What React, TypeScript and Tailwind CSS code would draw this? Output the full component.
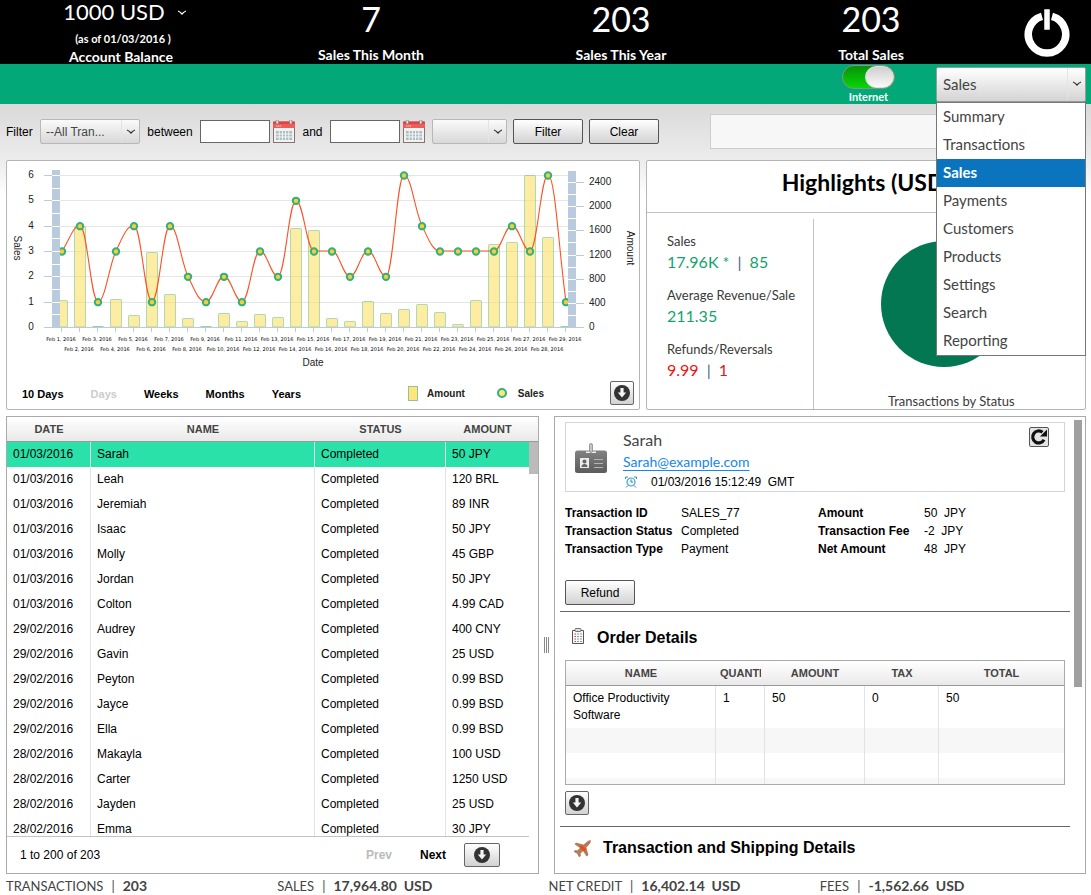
import React from 'react';

const ARIAL = "font-['Liberation_Sans',Arial,sans-serif]";
const LATO = "font-['Lato',Carlito,sans-serif]";

const stats = [
  { value: '7', label: 'Sales This Month' },
  { value: '203', label: 'Sales This Year' },
  { value: '203', label: 'Total Sales' },
];

const menuItems = [
  'Summary',
  'Transactions',
  'Sales',
  'Payments',
  'Customers',
  'Products',
  'Settings',
  'Search',
  'Reporting',
];

const sales = [
  ['01/03/2016', 'Sarah', '50 JPY'],
  ['01/03/2016', 'Leah', '120 BRL'],
  ['01/03/2016', 'Jeremiah', '89 INR'],
  ['01/03/2016', 'Isaac', '50 JPY'],
  ['01/03/2016', 'Molly', '45 GBP'],
  ['01/03/2016', 'Jordan', '50 JPY'],
  ['01/03/2016', 'Colton', '4.99 CAD'],
  ['29/02/2016', 'Audrey', '400 CNY'],
  ['29/02/2016', 'Gavin', '25 USD'],
  ['29/02/2016', 'Peyton', '0.99 BSD'],
  ['29/02/2016', 'Jayce', '0.99 BSD'],
  ['29/02/2016', 'Ella', '0.99 BSD'],
  ['28/02/2016', 'Makayla', '100 USD'],
  ['28/02/2016', 'Carter', '1250 USD'],
  ['28/02/2016', 'Jayden', '25 USD'],
  ['28/02/2016', 'Emma', '30 JPY'],
];

const totals = [
  ['TRANSACTIONS', '203', ''],
  ['SALES', '17,964.80', 'USD'],
  ['NET CREDIT', '16,402.14', 'USD'],
  ['FEES', '-1,562.66', 'USD'],
];

const dailySales = [
  3, 4, 1, 3, 4, 1, 4, 2, 1, 2, 1, 3, 2, 5, 3, 3, 2, 3, 2, 6, 4, 3, 3, 3, 3, 4, 3, 6, 1,
];
const dailyAmount = [
  445, 1670, 15, 460, 195, 1240, 545, 150, 15, 230, 100, 210, 165, 1640, 1605, 145, 105, 430, 230,
  295, 380, 245, 50, 455, 1370, 1405, 2510, 1490, 15,
];

const X0 = 62;
const DX = 18;
const BASE = 327;
const xAt = (i: number) => X0 + i * DX;
const ySales = (v: number) => BASE - (v * 152) / 6;
const yAmount = (v: number) => BASE - (v * 145) / 2400;

function splinePath(values: number[]) {
  const ys = values.map(ySales);
  const slope = ys.map((y, i) => {
    if (i === 0) return (ys[1] - y) / DX;
    if (i === ys.length - 1) return (y - ys[i - 1]) / DX;
    const before = y - ys[i - 1];
    const after = ys[i + 1] - y;
    return before * after <= 0 ? 0 : (before + after) / 2 / DX;
  });
  let d = `M${xAt(0)} ${ys[0]}`;
  for (let i = 1; i < ys.length; i++) {
    const h = DX * 0.4;
    d += ` C${xAt(i - 1) + h} ${ys[i - 1] + slope[i - 1] * h} ${xAt(i) - h} ${ys[i] - slope[i] * h} ${xAt(i)} ${ys[i]}`;
  }
  return d;
}

function Chart() {
  return (
    <svg
      viewBox="7 161 632 211"
      className="block w-full"
      role="img"
      aria-label="Sales and amount by date"
      fontFamily="'Liberation Sans', Arial, sans-serif"
    >
      {[1, 2, 3, 4, 5, 6].map((v) => (
        <path key={v} d={`M60 ${Math.round(ySales(v)) + 0.5}H568`} stroke="#e6e6e6" />
      ))}
      {dailyAmount.map((v, i) => {
        const left = Math.max(xAt(i) - 6, 58) + 0.5;
        const right = xAt(i) + 5.5;
        const y = Math.round(yAmount(v)) + 0.5;
        return (
          <rect
            key={i}
            x={left}
            y={y}
            width={right - left}
            height={Math.max(BASE - y, 0.5)}
            rx="1"
            fill="#ffe066"
            fillOpacity="0.6"
            stroke="#2eb37c"
            strokeOpacity="0.4"
          />
        );
      })}
      <path d="M44 327.5H584" stroke="#b9cbdc" />
      {dailySales.map((_, i) => (
        <path key={i} d={`M${xAt(i) - 0.5} 327v5`} stroke="#b9cbdc" />
      ))}
      <path d={splinePath(dailySales)} fill="none" stroke="#fb5325" strokeWidth="1.1" />
      {dailySales.map((v, i) => (
        <circle key={i} cx={xAt(i)} cy={ySales(v) + 0.5} r="3.2" fill="#ffc83d" stroke="#2eb37c" strokeWidth="2" />
      ))}
      <rect x="52" y="170" width="8" height="157" fill="#b9cbdc" />
      <rect x="568" y="171" width="8" height="156" fill="#b9cbdc" />
      {Array.from({ length: 12 }, (_, i) => (
        <path key={i} d={`M52 ${Math.round(ySales((i + 1) / 2)) + 0.5}h8`} stroke="#fff" />
      ))}
      {Array.from({ length: 12 }, (_, i) => (
        <path key={i} d={`M568 ${Math.round(yAmount((i + 1) * 200)) + 0.5}h8`} stroke="#fff" />
      ))}
      <g fontSize="10" fill="#222">
        {[0, 1, 2, 3, 4, 5, 6].map((v) => (
          <g key={v}>
            <path d={`M44 ${Math.round(ySales(v)) + 0.5}h8`} stroke="#b9cbdc" />
            <text x="31" y={ySales(v) + 3} textAnchor="middle">
              {v}
            </text>
          </g>
        ))}
        {[0, 400, 800, 1200, 1600, 2000, 2400].map((v) => (
          <g key={v}>
            <path d={`M576 ${Math.round(yAmount(v)) + 0.5}h8`} stroke="#b9cbdc" />
            <text x="589" y={yAmount(v) + 3}>
              {v}
            </text>
          </g>
        ))}
        <text x="313" y="366" textAnchor="middle">
          Date
        </text>
        <text transform="translate(14 248) rotate(90)" textAnchor="middle">
          Sales
        </text>
        <text transform="translate(627 248) rotate(90)" textAnchor="middle">
          Amount
        </text>
      </g>
      <g fontSize="5" fill="#000" fontFamily="'DejaVu Sans', sans-serif">
        {dailySales.map((_, i) => (
          <text key={i} x={xAt(i) - 1} y={i % 2 ? 351 : 341} textAnchor="middle">
            {`Feb ${i + 1}, 2016`}
          </text>
        ))}
      </g>
    </svg>
  );
}

function Chevron({ className }: { className: string }) {
  return (
    <svg viewBox="0 0 10 6" className={className} aria-hidden="true">
      <path d="M1 1q2 0.6 4 3q2 -2.4 4 -3" fill="none" stroke="currentColor" strokeWidth="1.3" />
    </svg>
  );
}

function DownloadButton({ wide }: { wide?: boolean }) {
  return (
    <button
      type="button"
      aria-label="Download"
      className={`flex h-6 items-center justify-center rounded-xs border border-[#666] bg-linear-to-b from-white to-[#d2d2d2] ${wide ? 'w-9' : 'w-6'}`}
    >
      <svg viewBox="0 0 16 16" className="size-4" aria-hidden="true">
        <circle cx="8" cy="8" r="8" fill="#333" />
        <path d="M6.4 3h3.2v4.6h2.6L8 12.6 3.800 7.600h2.600z" fill="#f4f4f4" />
      </svg>
    </button>
  );
}

function PushButton({ children }: { children: React.ReactNode }) {
  return (
    <button
      type="button"
      className="h-[25px] w-[70px] rounded-xs border border-[#555] bg-linear-to-b from-white to-[#d2d2d2] text-xs text-black"
    >
      {children}
    </button>
  );
}

function SmallSelect({ label, value, width }: { label: string; value: string; width: string }) {
  return (
    <div className={`relative ${width}`}>
      <select
        aria-label={label}
        className="h-[25px] w-full appearance-none rounded-xs border border-[#b8b8b8] bg-linear-to-b from-[#fafafa] to-[#d8d8d8] pl-[5px] text-xs text-[#444]"
      >
        <option>{value}</option>
      </select>
      <span className="pointer-events-none absolute inset-y-px right-0 flex w-[19px] items-center justify-center border-l border-[#e4e4e4]">
        <Chevron className="w-[10px] text-[#333]" />
      </span>
    </div>
  );
}

function DateInput({ label }: { label: string }) {
  return (
    <div className="flex items-center gap-[3px]">
      <input aria-label={label} type="text" className="h-[23px] w-[70px] border border-[#666] bg-white px-1 text-xs" />
      <button type="button" aria-label={`Pick ${label}`}>
        <svg viewBox="0 0 22 23" className="h-[23px] w-[22px]" aria-hidden="true">
          <rect x="0.5" y="7" width="21" height="15.500" fill="#eef2f2" stroke="#8a7272" />
          <path d="M0 2.500q0-1 1-1h20q1 0 1 1V8H0z" fill="#ef5c5c" />
          <path d="M0 2.500q0-1 1-1h20q1 0 1 1V4H0z" fill="#dd4444" />
          <path d="M3 6h5" stroke="#ffd6d6" strokeDasharray="1.500 0.500" />
          <rect x="3" y="0" width="2.500" height="4" rx="1" fill="#ddd" stroke="#777" strokeWidth="0.6" />
          <rect x="16.500" y="0" width="2.500" height="4" rx="1" fill="#ddd" stroke="#777" strokeWidth="0.6" />
          <rect x="3" y="11" width="16" height="9" fill="#aebcc0" />
          <path d="M3 14h16M3 17h16M6.200 11v9M9.400 11v9M12.600 11v9M15.800 11v9" stroke="#f2f6f6" />
        </svg>
      </button>
    </div>
  );
}

function Header() {
  return (
    <header className={`grid h-16 grid-cols-[246fr_250fr_250fr_250fr_95fr] bg-black text-center text-white ${LATO}`}>
      <div className="flex flex-col items-center pr-1">
        <button type="button" className="-mt-[2px] ml-2 flex h-7 items-center gap-3 text-[22px] leading-7">
          1000 USD
          <Chevron className="mt-px w-[10px]" />
        </button>
        <div className="mt-[5px] ml-1 text-[11px] leading-4 font-bold">(as of 01/03/2016 )</div>
        <div className="mt-px text-[14px] leading-[17px] font-bold">Account Balance</div>
      </div>
      {stats.map((s) => (
        <div key={s.label} className="-mt-[2px]">
          <div className="h-[48px] text-[34px] leading-[41px]">{s.value}</div>
          <div className="text-[14px] leading-[17px] font-bold">{s.label}</div>
        </div>
      ))}
      <div className="flex items-center justify-center pl-[6px]">
        <button type="button" aria-label="Log out">
          <svg viewBox="0 0 46 48" className="h-12 w-[46px]" aria-hidden="true">
            <path
              d="M18 7.300A18.700 18.700 0 1 0 28 7.300"
              fill="none"
              stroke="#fff"
              strokeWidth="7.500"
            />
            <rect x="20" y="0" width="6" height="21" fill="#fff" stroke="#000" strokeWidth="0.5" />
          </svg>
        </button>
      </div>
    </header>
  );
}

function NavBar() {
  return (
    <nav className={`flex h-10 items-start justify-end gap-[41px] bg-[#02a877] pr-[5px] ${LATO}`}>
      <label className="flex flex-col items-center pt-px text-[11px] font-bold text-white">
        <input type="checkbox" defaultChecked className="peer sr-only" />
        <span className="flex h-6 w-[53px] justify-end rounded-full border border-[#8f8f8f] bg-linear-to-b from-[#089208] to-[#06d706]">
          <span className="h-full w-[29px] rounded-full border border-[#e0e0e0] bg-linear-to-b from-[#cfcfcf] to-[#fafafa]" />
        </span>
        <span className="leading-4">Internet</span>
      </label>
      <div className="relative mt-[3px] w-[150px]">
        <select
          aria-label="Section"
          defaultValue="Sales"
          className="h-[35px] w-full appearance-none rounded-xs border border-[#9a9a9a] bg-linear-to-b from-white to-[#d4d4d4] pl-[6px] text-[15px] text-[#444]"
        >
          {menuItems.map((m) => (
            <option key={m}>{m}</option>
          ))}
        </select>
        <span className="pointer-events-none absolute top-px right-0 flex h-8 w-[19px] items-center justify-center border-l border-[#e4e4e4]">
          <Chevron className="w-[10px] text-[#333]" />
        </span>
        <ul
          role="listbox"
          aria-label="Sections"
          className="absolute top-[35px] left-0 z-10 w-full border border-[#777] bg-white text-[15px] leading-[26px] text-[#444]"
        >
          {menuItems.map((m) => (
            <li
              key={m}
              role="option"
              aria-selected={m === 'Sales'}
              className={m === 'Sales' ? 'bg-[#0b74be] pb-[2px] pl-[6px] font-bold text-white' : 'pb-[2px] pl-[6px]'}
            >
              {m}
            </li>
          ))}
        </ul>
      </div>
    </nav>
  );
}

function FilterBar() {
  return (
    <form className={`flex h-14 items-center px-[6px] pb-px text-xs text-black ${ARIAL}`} onSubmit={(e) => e.preventDefault()}>
      <span className="w-[34px]">Filter</span>
      <SmallSelect label="Transaction filter" value="--All Tran..." width="w-[100px]" />
      <span className="w-[60px] text-center">between</span>
      <DateInput label="start date" />
      <span className="w-[35px] text-center">and</span>
      <DateInput label="end date" />
      <div className="ml-[7px] flex gap-[6px]">
        <SmallSelect label="Currency" value="" width="w-[75px]" />
        <PushButton>Filter</PushButton>
        <PushButton>Clear</PushButton>
      </div>
      <input aria-label="Search" type="text" className="ml-[51px] h-[35px] min-w-0 flex-1 border border-[#ccc] bg-[#f7f7f7] px-2" />
    </form>
  );
}

function ChartCard() {
  const ranges = ['10 Days', 'Days', 'Weeks', 'Months', 'Years'];
  return (
    <section className={`rounded-xs border border-[#b5b5b5] bg-white ${ARIAL}`}>
      <Chart />
      <div className="flex h-[37px] items-start pt-[9px] pr-[5px] pl-[15px]">
        <div className="flex h-[26px] items-center gap-[27px] text-[11px] font-bold">
          {ranges.map((r) => (
            <button key={r} type="button" disabled={r === 'Days'} className="text-black disabled:text-[#ccc]">
              {r}
            </button>
          ))}
        </div>
        <div className="ml-auto flex h-6 items-center text-[10px] font-bold text-[#222]">
          <span className="mr-[9px] h-[15px] w-[10px] border border-[#8cc49c] bg-[#ffe57a]" />
          Amount
          <span className="mr-[11px] ml-8 size-[10px] rounded-full border-2 border-[#2eb37c] bg-[#ffe57a]" />
          Sales
        </div>
        <div className="ml-[66px]">
          <DownloadButton />
        </div>
      </div>
    </section>
  );
}

function HighlightsCard() {
  return (
    <section className={`flex flex-col rounded-xs border border-[#b5b5b5] bg-white text-[#3a3a3a] ${LATO}`}>
      <h2 className="border-b border-[#bcc6c6] pt-[5px] pb-[14px] text-center text-[23px] leading-8 font-bold text-black">
        Highlights (USD)
      </h2>
      <div className="grid flex-1 grid-cols-[167fr_272fr]">
        <dl className="mt-[6px] border-r border-[#bcc6c6] pt-3 pl-5 text-[13px] leading-5">
          <dt>Sales</dt>
          <dd className="mb-3 text-[16px] leading-[22px] text-[#11a46d]">
            17.96K * <span className="px-1 text-[#3b6480]">|</span> 85
          </dd>
          <dt>Average Revenue/Sale</dt>
          <dd className="mb-3 text-[16px] leading-[22px] text-[#11a46d]">211.35</dd>
          <dt>Refunds/Reversals</dt>
          <dd className="text-[16px] leading-[22px] text-[#ee1111]">
            9.99 <span className="px-1 text-[#3b6480]">|</span> 1
          </dd>
        </dl>
        <figure className="flex flex-col items-center pt-7 pl-1">
          <svg viewBox="0 0 126 126" className="mr-[14px] size-[126px]" role="img" aria-label="Completed">
            <circle cx="63" cy="63" r="63" fill="#027752" />
          </svg>
          <figcaption className="mt-auto text-[13px] leading-4">Transactions by Status</figcaption>
        </figure>
      </div>
    </section>
  );
}

function SalesList() {
  const cell = 'h-[25px] border-r border-[#e2e2e2] px-[6px] pt-0 pb-[2px] whitespace-nowrap';
  return (
    <section className={`flex flex-col border border-[#aaa] bg-white text-xs text-black ${ARIAL}`}>
      <div className="h-[419px] overflow-hidden">
        <table className="w-full table-fixed border-separate border-spacing-0 text-left">
          <colgroup>
            <col className="w-[84px]" />
            <col />
            <col className="w-[131px]" />
            <col className="w-[83px]" />
            <col className="w-[9px]" />
          </colgroup>
          <thead className="text-[11px] text-[#444]">
            <tr>
              {['DATE', 'NAME', 'STATUS', 'AMOUNT', ''].map((h) => (
                <th
                  key={h}
                  className="h-[25px] border-b border-[#999] bg-linear-to-b from-white to-[#e9e9e9] p-0 text-center font-bold"
                >
                  {h}
                </th>
              ))}
            </tr>
          </thead>
          <tbody>
            {sales.map(([date, name, amount], i) => (
              <tr key={i} className={i === 0 ? 'bg-[#2ae2a9]' : ''}>
                <td className={cell}>{date}</td>
                <td className={cell}>{name}</td>
                <td className={cell}>Completed</td>
                <td className="h-[25px] px-[6px] pt-0 pb-[2px] whitespace-nowrap">{amount}</td>
                {i === 0 && (
                  <td rowSpan={sales.length} className="bg-white p-0 align-top">
                    <div className="h-8 bg-[#bbb]" />
                  </td>
                )}
              </tr>
            ))}
          </tbody>
        </table>
      </div>
      <div className="mr-[9px] flex h-[37px] items-center border-t border-[#bcc6c6] pr-[29px] pl-[13px]">
        <span className="mr-auto">1 to 200 of 203</span>
        <button type="button" disabled className="font-bold text-[#bbb]">
          Prev
        </button>
        <button type="button" className="mr-[18px] ml-7 font-bold">
          Next
        </button>
        <DownloadButton wide />
      </div>
    </section>
  );
}

function SalePanel() {
  const facts = [
    ['Transaction ID', 'SALES_77', 'Amount', '50\u00a0 JPY'],
    ['Transaction Status', 'Completed', 'Transaction Fee', '-2\u00a0 JPY'],
    ['Transaction Type', 'Payment', 'Net Amount', '48\u00a0 JPY'],
  ];
  return (
    <section className={`flex border border-[#aaa] bg-white pr-[3px] text-xs text-black ${ARIAL}`}>
      <div className="min-w-0 flex-1 pt-[5px] pr-1 pl-[5px]">
        <div className="mr-[5px] ml-[5px] flex h-[70px] items-start border border-[#d5d5d5]">
          <svg viewBox="0 0 32 30" className="mt-5 ml-[9px] h-[30px] w-8" aria-hidden="true">
            <defs>
              <linearGradient id="badge" x1="0" y1="0" x2="0" y2="1">
                <stop offset="0" stopColor="#828282" />
                <stop offset="1" stopColor="#5c5c5c" />
              </linearGradient>
            </defs>
            <rect x="0" y="7.500" width="32" height="22.500" rx="2.500" fill="url(#badge)" />
            <path d="M11 8.500h10v1.500H11z" fill="#f2f2f2" />
            <rect x="14.500" y="0.500" width="3" height="9" rx="1.500" fill="#c4c4c4" stroke="#8a8a8a" strokeWidth="0.800" />
            <rect x="5" y="15" width="9" height="10" fill="#ececec" />
            <circle cx="9.500" cy="18.500" r="2" fill="#666" />
            <path d="M6.500 24q0-3 3-3t3 3z" fill="#666" />
            <path d="M19 16.500h9M19 20.500h9M19 24.500h9" stroke="#b4b4b4" />
          </svg>
          <div className="ml-4 pt-[6px]">
            <div className={`text-[16px] leading-[22px] text-[#444] ${LATO}`}>Sarah</div>
            <a href="mailto:Sarah@example.com" className={`block text-[14px] leading-[22px] text-[#1686f0] underline underline-offset-3 ${LATO}`}>
              Sarah@example.com
            </a>
            <div className="flex items-center leading-[18px]">
              <svg viewBox="0 0 12 12" className="mr-[14px] ml-[2px] size-3" aria-hidden="true">
                <circle cx="6" cy="6" r="4" fill="#eaf6fb" stroke="#49a0c8" strokeWidth="1.200" />
                <path d="M6 3.500V6h2M1 11.500l2-2M11 11.500l-2-2M0.500 3V1H3M11.500 3V1H9" fill="none" stroke="#3c87ae" />
              </svg>
              01/03/2016 15:12:49&nbsp; GMT
            </div>
          </div>
          <button
            type="button"
            aria-label="Refresh"
            className="mt-1 mr-[15px] ml-auto flex size-5 items-center justify-center rounded-xs border border-[#555] bg-[#e4e4e4]"
          >
            <svg viewBox="0 0 18 18" className="size-[18px]" aria-hidden="true">
              <path d="M14 11.800A6 6 0 1 1 12.500 4.300" fill="none" stroke="#111" strokeWidth="3.200" />
              <path d="M17 1.500V8.500H10z" fill="#111" />
            </svg>
          </button>
        </div>
        <dl className="mt-3 ml-[5px] grid grid-cols-[116px_137px_106px_1fr] leading-[18px]">
          {facts.map((f) => (
            <React.Fragment key={f[0]}>
              <dt className="font-bold">{f[0]}</dt>
              <dd>{f[1]}</dd>
              <dt className="font-bold">{f[2]}</dt>
              <dd>{f[3]}</dd>
            </React.Fragment>
          ))}
        </dl>
        <div className="mt-[22px] mb-[6px] ml-[5px]">
          <PushButton>Refund</PushButton>
        </div>
        <hr className="border-[#666]" />
        <h3 className="flex h-12 items-center gap-3 pt-1 pl-[11px] text-[16px] font-bold">
          <svg viewBox="0 0 14 16" className="-mt-1 h-4 w-[14px]" aria-hidden="true">
            <path d="M1.500 2.500h11v13h-11z" fill="#f8f8f8" stroke="#555" />
            <rect x="4" y="0.500" width="6" height="3" rx="1" fill="#ddd" stroke="#555" strokeWidth="0.800" />
            <path d="M3.500 6h1.500M3.500 8.500h1.500M3.500 11h1.500M3.500 13.500h1.500" stroke="#b44" />
            <path d="M6 6h5M6 8.500h5M6 11h5M6 13.500h5" stroke="#999" strokeDasharray="2 1" />
          </svg>
          Order Details
        </h3>
        <div className="mr-[5px] ml-[5px] h-[125px] overflow-hidden border border-[#aaa]">
          <table className="w-full table-fixed border-separate border-spacing-0 text-left">
            <colgroup>
              <col className="w-[150px]" />
              <col className="w-[49px]" />
              <col className="w-[100px]" />
              <col className="w-[74px]" />
              <col />
            </colgroup>
            <thead className="text-[11px] text-[#444]">
              <tr>
                {['NAME', 'QUANTITY', 'AMOUNT', 'TAX', 'TOTAL'].map((h) => (
                  <th
                    key={h}
                    className="h-[25px] border-b border-[#999] bg-linear-to-b from-white to-[#e9e9e9] px-1 py-0 text-center font-bold"
                  >
                    <div className="overflow-hidden whitespace-nowrap">{h}</div>
                  </th>
                ))}
              </tr>
            </thead>
            <tbody className="align-top leading-[17px]">
              <tr>
                {['Office Productivity Software', '1', '50', '0', '50'].map((c, i) => (
                  <td key={i} className="h-[42px] border-r border-[#e2e2e2] px-[7px] pt-1 pb-0 last:border-r-0">
                    {c}
                  </td>
                ))}
              </tr>
              {[0, 1, 2].map((r) => (
                <tr key={r} className="odd:bg-white even:bg-[#f7f7f7]">
                  {[0, 1, 2, 3, 4].map((c) => (
                    <td key={c} className="h-[25px] border-r border-[#e2e2e2] p-0 last:border-r-0" />
                  ))}
                </tr>
              ))}
            </tbody>
          </table>
        </div>
        <div className="mt-[6px] mb-[11px] ml-[5px]">
          <DownloadButton />
        </div>
        <hr className="border-[#666]" />
        <h3 className="flex h-[46px] items-center gap-3 pb-1 pl-[14px] text-[16px] font-bold">
          <svg viewBox="0 0 17 17" className="size-[17px]" aria-hidden="true">
            <path
              d="M16.500 0.500q-2.500 0-4.500 2.500L9.500 5 2 3 1 4.300l5.500 3.500-3 3L1 10.500 0 11.600l3.500 1.800L5.300 17l1.100-1-0.200-2.500 3-3 3.400 5.500 1.400-1L12 7.500l2.200-2.300q2.300-2.200 2.300-4.700z"
              fill="#c07a50"
              stroke="#8a6a55"
              strokeWidth="0.600"
            />
            <path d="M6.500 6l4.500 4.500" stroke="#f04a10" strokeWidth="3" />
          </svg>
          Transaction and Shipping Details
        </h3>
      </div>
      <div className="mt-[3px] h-[267px] w-2 bg-[#a0a0a0]" />
    </section>
  );
}

export default function App() {
  return (
    <div className="bg-white">
      <Header />
      <NavBar />
      <div className="bg-[linear-gradient(to_bottom,#d9d9d9,#eeeeee_60px,#ffffff_92px)]">
        <FilterBar />
        <main className="pr-[5px] pl-[6px]">
          <div className="grid grid-cols-[634fr_440fr] gap-[6px]">
            <ChartCard />
            <HighlightsCard />
          </div>
          <div className="mt-[6px] grid grid-cols-[533fr_15px_532fr]">
            <SalesList />
            <div className="flex items-center justify-center gap-px">
              <span className="h-4 w-px bg-[#888]" />
              <span className="h-4 w-px bg-[#888]" />
              <span className="h-4 w-px bg-[#888]" />
            </div>
            <SalePanel />
          </div>
        </main>
      </div>
      <footer className={`grid grid-cols-4 pt-[2px] pl-[6px] text-[13px] leading-5 text-[#444] ${LATO}`}>
        {totals.map(([label, value, unit]) => (
          <div key={label} className="flex items-baseline whitespace-pre">
            <span>{label}</span>
            <span className="px-2">|</span>
            <b className="text-[14px]">
              {value}
              {unit && `  ${unit}`}
            </b>
          </div>
        ))}
      </footer>
    </div>
  );
}
